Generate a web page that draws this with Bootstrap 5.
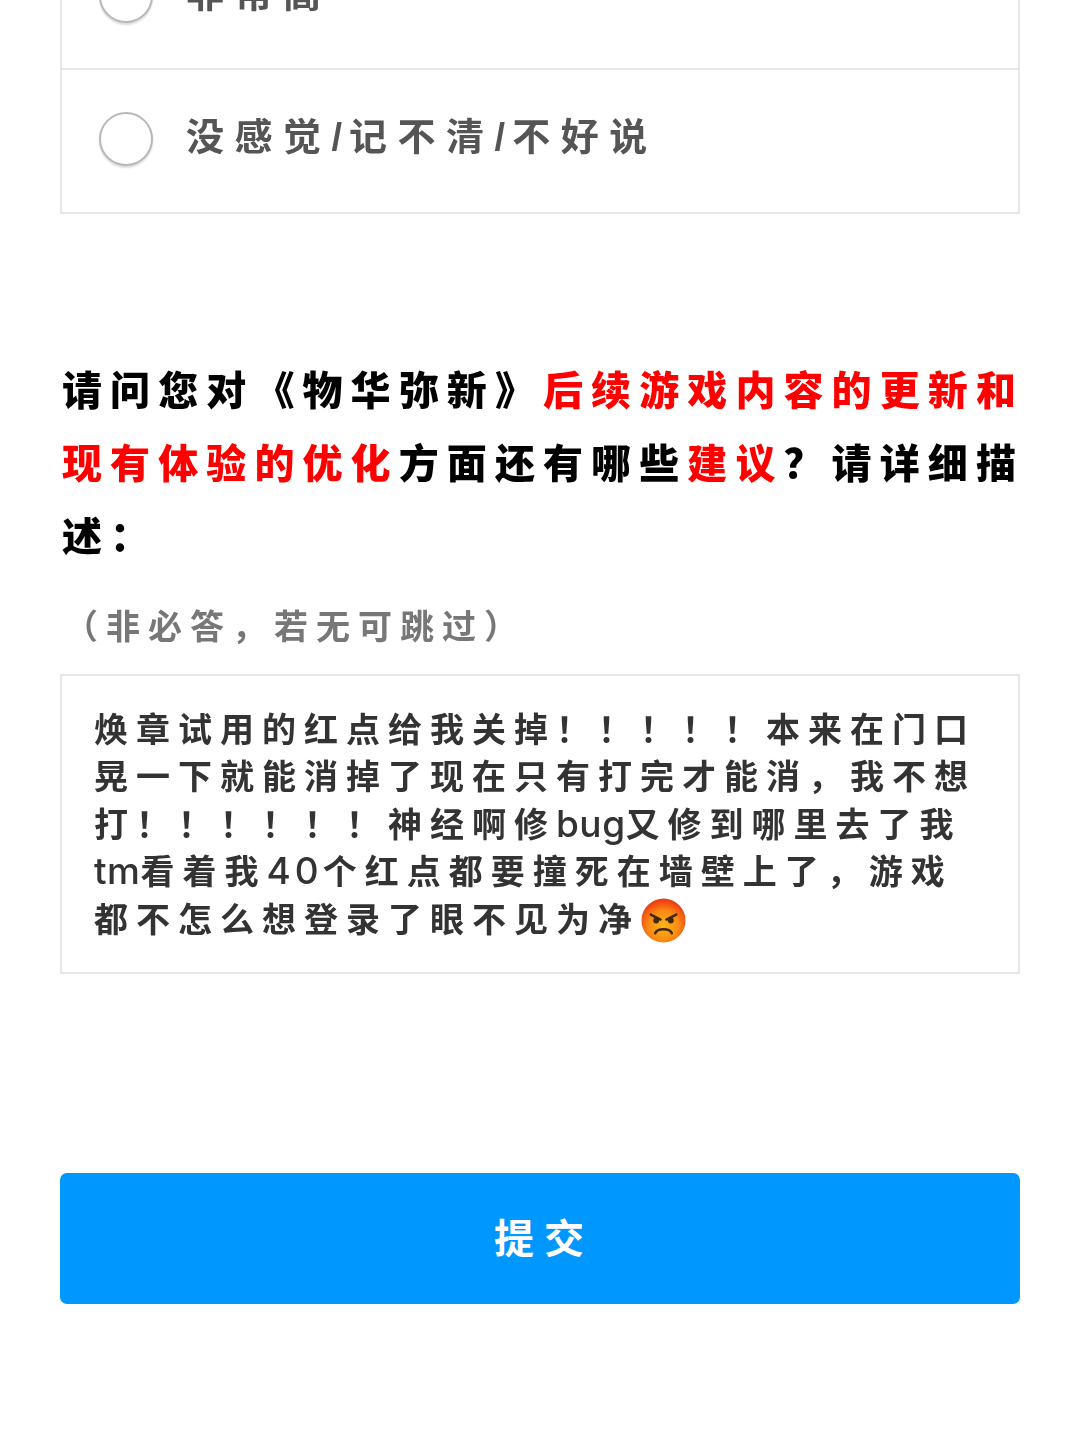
<!DOCTYPE html>
<html lang="zh-CN">
<head>
<meta charset="utf-8">
<title>问卷</title>
<link href="https://cdn.jsdelivr.net/npm/bootstrap@5.3.0/dist/css/bootstrap.min.css" rel="stylesheet">
<style>
html,body{height:1439px;overflow:hidden;background:#fff}
body{font-family:"Liberation Sans","Noto Sans CJK SC",sans-serif}
.survey-wrap{padding:0 60px;filter:blur(.5px)}
.opt-list{margin-top:-74px;border-radius:0}
.opt-list .list-group-item{height:144px;padding:0 0 0 37px;border:2.5px solid #e8e8e8;border-radius:0;display:flex;align-items:center;gap:33px}
.opt-list .list-group-item+.list-group-item{border-top-width:0}
.opt-radio{width:54px;height:54px;margin:0;flex:none;border:2px solid #b8b8b8;box-shadow:0 2px 2px rgba(0,0,0,.14);transform:translateY(-2px)}
.opt-text{font-size:38px;font-weight:700;letter-spacing:10.5px;color:#555;line-height:1;position:relative;top:-4px}
.opt-slash{letter-spacing:7px}
.q-title{margin:141px 0 0;padding-left:2px;font-size:40px;font-weight:900;line-height:73px;letter-spacing:8.1px;color:#000;white-space:nowrap}
.q-red{color:#fe0000}
.q-note{margin:28px 0 0 4px;font-size:34px;font-weight:700;line-height:50px;letter-spacing:8px;color:#777}
.answer-box{margin-top:22px;height:300px;padding:31px 30px 29px 32px;border:2.5px solid #e8e8e8;border-radius:0;font-size:34px;font-weight:700;line-height:47.4px;letter-spacing:8px;color:#333;white-space:nowrap}
.answer-box .latin{font-family:Inter,"Liberation Sans",sans-serif;font-size:37px;font-weight:500;letter-spacing:.5px;line-height:1}
.answer-box .digits{letter-spacing:4px}
.emoji-ico{width:45px;height:45px;vertical-align:-1px;margin:-10px 0 -10px 1px}
.submit-btn{margin-top:199px;height:131px;width:100%;padding-left:20px;background:#0097ff;border:0;border-radius:7px;color:#fff;font-size:40px;font-weight:700;letter-spacing:10px}
.submit-btn:hover{background:#0097ff;color:#fff}
</style>
</head>
<body>
<div class="survey-wrap">
  <div class="list-group opt-list">
    <label class="list-group-item"><input class="form-check-input opt-radio" type="radio" name="q1"><span class="opt-text">非常高</span></label>
    <label class="list-group-item"><input class="form-check-input opt-radio" type="radio" name="q1"><span class="opt-text">没感觉<span class="opt-slash">/</span>记不清<span class="opt-slash">/</span>不好说</span></label>
  </div>
  <p class="q-title">请问您对《物华弥新》<span class="q-red">后续游戏内容的更新和<br>现有体验的优化</span>方面还有哪些<span class="q-red">建议</span>？请详细描<br>述：</p>
  <p class="q-note">（非必答，若无可跳过）</p>
  <div class="form-control answer-box">焕章试用的红点给我关掉！！！！！本来在门口<br>晃一下就能消掉了现在只有打完才能消，我不想<br>打！！！！！！神经啊修<span class="latin">bug</span>又修到哪里去了我<br><span class="latin">tm</span>看着我<span class="latin digits">40</span>个红点都要撞死在墙壁上了，游戏<br>都不怎么想登录了眼不见为净<svg class="emoji-ico" viewBox="0 0 46 46" role="img" aria-label="生气"><defs><radialGradient id="angry" cx="50%" cy="62%" r="58%"><stop offset="0" stop-color="#fdb515"/><stop offset=".6" stop-color="#f98a12"/><stop offset="1" stop-color="#ee3d14"/></radialGradient></defs><circle cx="23" cy="23" r="22.5" fill="url(#angry)"/><path d="M10 17l10 5M36 17l-10 5" stroke="#43270e" stroke-width="2.6" stroke-linecap="round"/><circle cx="15.5" cy="23" r="3" fill="#43270e"/><circle cx="30.5" cy="23" r="3" fill="#43270e"/><path d="M14.5 36c2-5.500 15-5.500 17 0" fill="none" stroke="#43270e" stroke-width="2.6" stroke-linecap="round"/></svg></div>
  <button class="btn submit-btn" type="button">提交</button>
</div>
<script src="https://cdn.jsdelivr.net/npm/bootstrap@5.3.0/dist/js/bootstrap.bundle.min.js"></script>
</body>
</html>
